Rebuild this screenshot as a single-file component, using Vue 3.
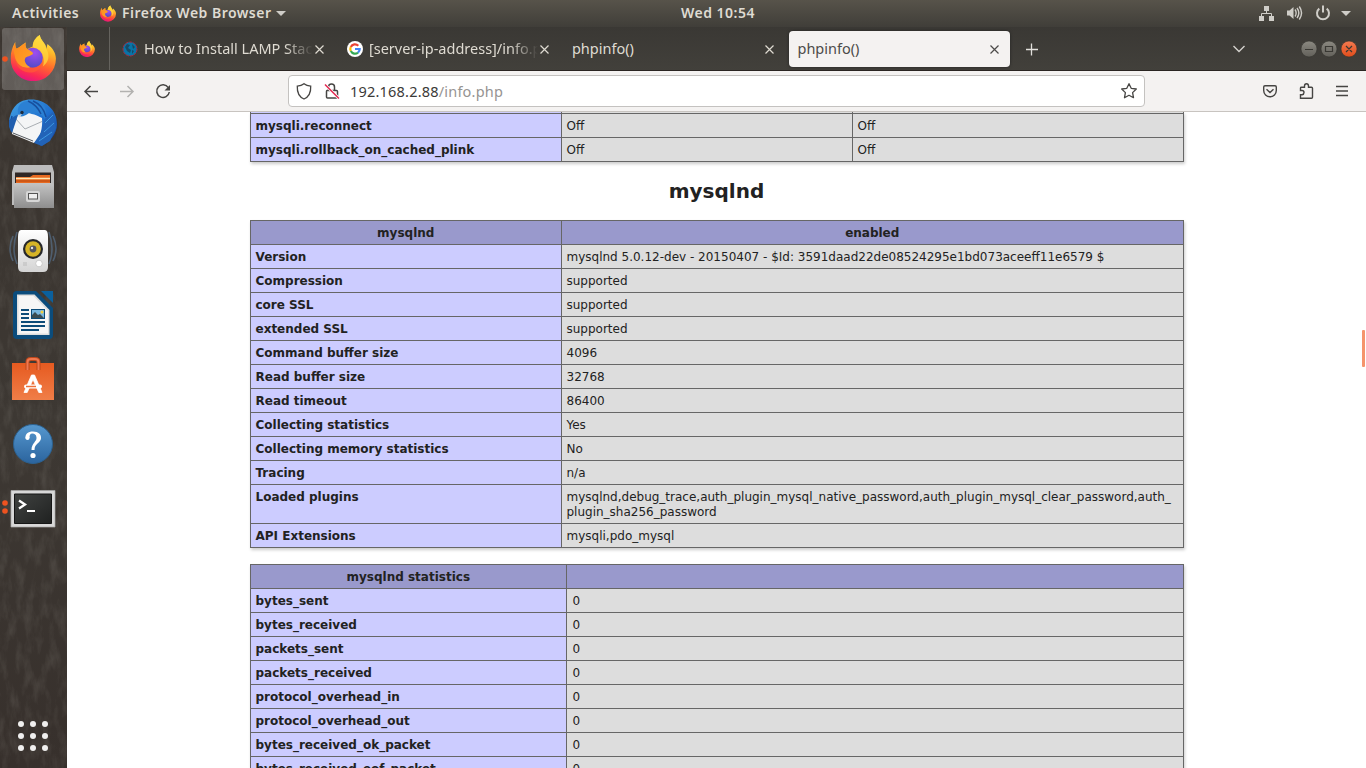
<script setup>
const prevRows = [
  ['mysqli.reconnect', 'Off', 'Off'],
  ['mysqli.rollback_on_cached_plink', 'Off', 'Off'],
]
const rows = [
  ['Version', 'mysqlnd 5.0.12-dev - 20150407 - $Id: 3591daad22de08524295e1bd073aceeff11e6579 $'],
  ['Compression', 'supported'],
  ['core SSL', 'supported'],
  ['extended SSL', 'supported'],
  ['Command buffer size', '4096'],
  ['Read buffer size', '32768'],
  ['Read timeout', '86400'],
  ['Collecting statistics', 'Yes'],
  ['Collecting memory statistics', 'No'],
  ['Tracing', 'n/a'],
  ['Loaded plugins', 'mysqlnd,debug_trace,auth_plugin_mysql_native_password,auth_plugin_mysql_clear_password,auth_\nplugin_sha256_password'],
  ['API Extensions', 'mysqli,pdo_mysql'],
]
const stats = ['bytes_sent', 'bytes_received', 'packets_sent', 'packets_received', 'protocol_overhead_in', 'protocol_overhead_out', 'bytes_received_ok_packet', 'bytes_received_eof_packet']
</script>

<template>
  <div class="desktop">
    <svg class="defs" width="0" height="0">
      <defs>
        <linearGradient id="ffBody" x1=".75" y1="0" x2=".4" y2="1">
          <stop offset="0" stop-color="#fff34a" /><stop offset=".32" stop-color="#ffb629" />
          <stop offset=".6" stop-color="#ff6a2c" /><stop offset=".85" stop-color="#fb2a55" /><stop offset="1" stop-color="#e5177c" />
        </linearGradient>
        <radialGradient id="ffCore" cx=".6" cy=".25" r=".8">
          <stop offset="0" stop-color="#a04df0" /><stop offset="1" stop-color="#4d4bc4" />
        </radialGradient>
        <linearGradient id="ffHead" x1="0" y1="0" x2="1" y2="1">
          <stop offset="0" stop-color="#ff8a1c" /><stop offset="1" stop-color="#ffa52a" />
        </linearGradient>
        <symbol id="firefox" viewBox="32 30 135 137">
          <path d="M46 51C45 60 47 67 50 71C57 67 62 62 77 52C75 60 77 67 81 72L98 64C98 50 107 37 119 30C121 47 138 55 138 72L142 57C158 70 167 84 167 101A67 66 0 0 1 32 101C32 84 38 63 46 51Z" fill="url(#ffBody)" />
          <path d="M98 64C98 50 107 37 119 30C121 47 138 52 139 72C150 92 145 112 128 124C136 104 128 80 112 74Z" fill="#ffd83d" opacity=".75" />
          <circle cx="98" cy="98" r="30" fill="url(#ffCore)" />
          <path d="M46 51C45 60 47 67 50 71C57 67 62 62 77 52C75 60 77 67 81 72C88 75 97 80 99 84C96 92 84 92 77 97C70 106 77 119 91 126C70 132 51 119 46 100C42 82 39 70 46 51Z" fill="url(#ffHead)" />
          <path d="M46 101C55 124 73 132 96 127C114 126 124 117 127 108C125 136 97 148 73 139C57 133 47 118 46 101Z" fill="#ff5a36" opacity=".75" />
        </symbol>
        <linearGradient id="bird" x1="0" y1="0" x2="1" y2="1"><stop offset="0" stop-color="#45a4e5" /><stop offset=".55" stop-color="#1f6fce" /><stop offset="1" stop-color="#143f94" /></linearGradient>
        <linearGradient id="steel" x1="0" y1="0" x2="0" y2="1"><stop offset="0" stop-color="#c4c4c4" /><stop offset="1" stop-color="#8e8e8e" /></linearGradient>
        <linearGradient id="white" x1="0" y1="0" x2="0" y2="1"><stop offset="0" stop-color="#fff" /><stop offset="1" stop-color="#d4d4d4" /></linearGradient>
        <linearGradient id="bag" x1="0" y1="0" x2="0" y2="1"><stop offset="0" stop-color="#e65a20" /><stop offset="1" stop-color="#f07e48" /></linearGradient>
        <linearGradient id="help" x1="0" y1="0" x2="0" y2="1"><stop offset="0" stop-color="#5698cf" /><stop offset="1" stop-color="#2b649e" /></linearGradient>
        <linearGradient id="term" x1="0" y1="0" x2="1" y2="1"><stop offset="0" stop-color="#404240" /><stop offset=".5" stop-color="#303231" /><stop offset="1" stop-color="#1f2120" /></linearGradient>
        <linearGradient id="btnGrey" x1="0" y1="0" x2="0" y2="1"><stop offset="0" stop-color="#8b8981" /><stop offset="1" stop-color="#62605a" /></linearGradient>
        <linearGradient id="btnRed" x1="0" y1="0" x2="0" y2="1"><stop offset="0" stop-color="#f47a50" /><stop offset="1" stop-color="#e04d1b" /></linearGradient>
        <filter id="grain" x="0" y="0" width="1" height="1">
          <feTurbulence type="fractalNoise" baseFrequency=".12 .045" numOctaves="4" seed="7" />
          <feColorMatrix values="0 0 0 0 .62  0 0 0 0 .6  0 0 0 0 .54  1.5 0 0 0 -.62" />
        </filter>
      </defs>
    </svg>

    <header class="topbar">
      <span class="activities">Activities</span>
      <svg class="app-icon" width="16" height="17"><use href="#firefox" /></svg>
      <span class="app-name">Firefox Web Browser</span>
      <svg class="caret" width="10" height="5"><path d="M0 0H10L5 5Z" fill="#cfcdc8" /></svg>
      <span class="clock">Wed 10:54</span>
      <svg class="status" width="108" height="27" viewBox="1258 0 108 27" fill="none" stroke="#cfcdc8">
        <path d="M1264 6h5v5h-5zM1259 16h5v5h-5zM1269 16h5v5h-5z" fill="#cfcdc8" stroke="none" />
        <path d="M1266.500 11v2.500M1261.500 16v-2.500h10v2.500" />
        <path d="M1287 10.500h2.500L1293.500 7v12l-4-3.500h-2.500z" fill="#cfcdc8" stroke="none" />
        <path d="M1295 9.500q2.300 3.500 0 7M1297 8q3.700 5 0 10M1299.300 6.500q4.500 6.500 0 13" stroke-width="1.400" />
        <path d="M1319.300 8.600a6 6 0 1 0 7.400 0M1323 5.500v7" stroke-width="2" />
        <path d="M1341 11h10l-5 5z" fill="#cfcdc8" stroke="none" />
      </svg>
    </header>

    <div class="main">
      <aside class="dock">
        <svg class="texture" width="67" height="741"><rect width="67" height="741" filter="url(#grain)" /></svg>
        <svg width="67" height="64" viewBox="0 27 67 64">
          <rect x="2" y="28" width="62" height="62" rx="3" fill="#fff" fill-opacity=".2" />
          <circle cx="5" cy="59" r="2.800" fill="#ee5320" />
          <use href="#firefox" x="10.500" y="35" width="45.500" height="46" />
        </svg>
        <svg width="67" height="64" viewBox="0 91 67 64">
          <path d="M9 122C10 110 17 101 26 100C42 97 57 108 57 124C57 134 50 142 41 146L38 143L14 133C10 130 9 126 9 122Z" fill="url(#bird)" />
          <path d="M18 115C14 122 13 128 12 134L34 143C40 139 43 128 42 118C35 114 28 113 23 112Z" fill="#f4f5f6" />
          <path d="M15 118L25 129L42 121.500" fill="none" stroke="#a9aeb3" />
          <path d="M13 133L33 141" stroke="#55595e" />
          <path d="M19 116C16 109 19 102 27 101C40 97 49 106 45 119C41 113 35 111 29 113C25 116 22 117 19 116Z" fill="#2b80d3" />
          <path d="M28 101Q37 105 41 114M33 101Q43 105 46 117M12 116L10 126" stroke="#184f9e" fill="none" stroke-width="1.500" />
          <path d="M9 120C13 118 15 115 18 115L12 133C9 129 9 125 9 120Z" fill="#205eaf" />
          <path d="M45 119L42 131L34 143L42 146L50 141L56 128L53 112Z" fill="#2263b8" />
          <path d="M45 123l8-8M44 132l10-9M39 141l13-9" stroke="#3d99e2" />
          <circle cx="22" cy="112.500" r="1.700" fill="#202d3d" />
          <path d="M18 115l4-1-3 4z" fill="#d4d8dc" />
        </svg>
        <svg width="67" height="64" viewBox="0 155 67 64">
          <path d="M14 165H52L54 172V205H12V172Z" fill="#bcbcbc" />
          <path d="M15 172.500H51V184H15z" fill="#302724" />
          <path d="M16 177H30L33 175H50V184H16z" fill="#e86a20" />
          <path d="M16 178.500H50" stroke="#ffe6b0" stroke-width="1.300" /><path d="M16 181H50" stroke="#b4470e" />
          <path d="M14 183H52L54 185V208H14Z" fill="url(#steel)" />
          <rect x="26" y="191" width="14" height="11" rx="2" fill="#d6d6d6" /><rect x="28.500" y="193.500" width="9" height="5.500" fill="#eee" stroke="#555" />
        </svg>
        <svg width="67" height="64" viewBox="0 219 67 64">
          <g fill="none" stroke="#57718e" stroke-opacity=".65" stroke-width="1.600"><path d="M13 236Q7 249 13 261M17 232Q11 249 17 264M53 236Q59 249 53 261M49 232Q55 249 49 264" /></g>
          <path d="M21 230H45Q48 230 48 237V267Q48 272 43 272H23Q18 272 18 267V237Q18 230 21 230Z" fill="url(#white)" />
          <circle cx="33" cy="249" r="10" fill="#26272a" /><circle cx="33" cy="249" r="7.800" fill="#d6b427" />
          <circle cx="33" cy="249" r="3.400" fill="#54545a" /><circle cx="32" cy="248" r="1.200" fill="#e6e6e6" />
          <circle cx="39" cy="263.500" r="3.300" fill="#fff" stroke="#bbb" stroke-width=".7" /><path d="M24 262v4m2-4v4" stroke="#bbb" />
        </svg>
        <svg width="67" height="64" viewBox="0 283 67 64">
          <path d="M17 291H36L53 308V335Q53 339 49 339H17Q13 339 13 335V295Q13 291 17 291Z" fill="#0b4c7c" />
          <path d="M41 291H53V303Z" fill="#0b609d" />
          <path d="M17 294.500H34.500L49.500 310V335H17Z" fill="#dedede" /><path d="M18.500 296H33.500L48 311V333.500H18.500Z" fill="#f6f6f6" />
          <path d="M21 310h8M21 314h8M21 318h8M21 322h24M21 326h24M21 330h18" stroke="#0c4b78" stroke-width="2" />
          <path d="M31 309H45V319H31z" fill="#0c4b78" /><path d="M32 310H44V318H32z" fill="#78b6de" /><path d="M32 318v-3l3-3 3 3 2-1 4 4z" fill="#3b4b50" /><circle cx="42" cy="312" r="1.500" fill="#f2cf3c" />
        </svg>
        <svg width="67" height="64" viewBox="0 347 67 64">
          <path d="M12 363H54V400H12z" fill="url(#bag)" />
          <path d="M27.500 370V362Q27.500 359 31 359H35Q38.500 359 38.500 362V370" fill="none" stroke="#bf481b" stroke-width="4" />
          <path d="M27.500 370V362Q27.500 359 31 359H35Q38.500 359 38.500 362V370" fill="none" stroke="#ef7850" stroke-width="2" />
          <path d="M31.500 375H34.500L42 392.500H38.800L33 379.500L27.200 392.500H24Z" fill="#fff" stroke="#fff" stroke-width=".8" />
          <rect x="24" y="384.500" width="18" height="4" rx="2" fill="#fff" /><path d="M26 386.500h10" stroke="#ed7038" stroke-width="1.500" />
        </svg>
        <svg width="67" height="64" viewBox="0 411 67 64">
          <circle cx="33" cy="444" r="19.500" fill="url(#help)" stroke="#2c618f" />
          <path d="M25.500 438.500C25 434 28 431.500 33 431.500C38.500 431.500 41.500 434.500 41 438.500C40.500 443 34.500 443.500 34.500 450H31.500C31.500 443 37 441.500 36.500 437.500C36.200 434.500 34.500 433.500 32.500 433.500C30 433.500 29.500 435 29.500 438Z" fill="#fff" />
          <circle cx="27.500" cy="438" r="2" fill="#fff" /><circle cx="33" cy="455.500" r="2.600" fill="#fff" />
        </svg>
        <svg width="67" height="64" viewBox="0 475 67 64">
          <circle cx="5" cy="503" r="2.800" fill="#ee5320" /><circle cx="5" cy="511" r="2.800" fill="#ee5320" />
          <path d="M11 490.500H55V527H11z" fill="#d8d8d8" stroke="#aaa" stroke-width=".7" /><path d="M14.500 494H51.500V523.500H14.500z" fill="url(#term)" stroke="#161616" />
          <path d="M19 500.500l6 4-6 4" fill="none" stroke="#fff" stroke-width="2.300" /><path d="M27 511h8" stroke="#fff" stroke-width="2" />
        </svg>
        <svg class="apps" width="67" height="50" viewBox="0 711 67 50" fill="#f0efee">
          <g v-for="y in [724, 736, 748]" :key="y"><circle v-for="x in [21, 33, 45]" :key="x" :cx="x" :cy="y" r="3" /></g>
        </svg>
      </aside>

      <section class="browser">
        <div class="tabs">
          <div class="pinned"><svg width="16" height="16"><use href="#firefox" /></svg></div>
          <div class="tab">
            <svg class="fav" width="16" height="16"><circle cx="8" cy="8" r="7" fill="#0874a8" stroke="#aa2840" stroke-width="1" stroke-dasharray="3 1" /><path d="M5 3l3 1-2 3 3 2-1 3-3-2-2-4zM10 3l3 3-2 2zM10 9l2 1-2 3z" fill="#174965" /></svg>
            <span class="title t1">How to Install LAMP Stack</span>
            <svg class="x" width="9" height="9" viewBox="0 0 9 9"><path d="M.5 .5L8.500 8.500M8.500 .5L.5 8.500" /></svg>
          </div>
          <div class="tab">
            <svg class="fav" width="16" height="16"><circle cx="8" cy="8" r="8" fill="#fff" /><g fill="none" stroke-width="2.200"><path d="M3.800 5.900A4.700 4.700 0 0 1 11.300 4.700" stroke="#ea4335" /><path d="M3.800 10.100A4.700 4.700 0 0 1 3.800 5.900" stroke="#fbbc05" /><path d="M11 11.600A4.700 4.700 0 0 1 3.800 10.100" stroke="#34a853" /><path d="M8 8H12.700A4.700 4.700 0 0 1 11 11.600" stroke="#4285f4" /></g></svg>
            <span class="title t2">[server-ip-address]/info.php</span>
            <svg class="x" width="9" height="9" viewBox="0 0 9 9"><path d="M.5 .5L8.500 8.500M8.500 .5L.5 8.500" /></svg>
          </div>
          <div class="tab wide"><span class="title">phpinfo()</span><svg class="x" width="9" height="9" viewBox="0 0 9 9"><path d="M.5 .5L8.500 8.500M8.500 .5L.5 8.500" /></svg></div>
          <div class="tab active"><span class="title">phpinfo()</span><svg class="x" width="9" height="9" viewBox="0 0 9 9"><path d="M.5 .5L8.500 8.500M8.500 .5L.5 8.500" /></svg></div>
          <svg class="tab-tools" width="346" height="43" viewBox="1020 27 346 43" fill="none">
            <path d="M1026 49.500h12M1031.500 43.500v12" stroke="#e2e0dc" stroke-width="1.300" />
            <path d="M1233.500 46l5.500 5.500 5.500-5.500" stroke="#d4d2cd" stroke-width="1.400" />
            <g stroke="#33322e" stroke-width=".6"><circle cx="1309" cy="49" r="8" fill="url(#btnGrey)" /><circle cx="1329" cy="49" r="8" fill="url(#btnGrey)" /><circle cx="1349" cy="49" r="8" fill="url(#btnRed)" /></g>
            <path d="M1305 49.500h8M1325.500 46.500h7v5h-7zM1346 46l6 6M1352 46l-6 6" stroke="#393833" stroke-width="1.200" />
          </svg>
        </div>

        <div class="toolbar">
          <svg class="nav" width="221" height="40" viewBox="67 71 221 40" fill="none" stroke="#464543" stroke-width="1.500">
            <path d="M98 91.500H85M90.500 86l-5.500 5.500 5.500 5.500" />
            <path d="M120 91.500h13M127.500 86l5.500 5.500-5.500 5.500" stroke="#b3b2b0" />
            <path d="M168.300 87.600A6.300 6.300 0 1 0 169.300 92" /><path d="M170 85v5.500h-5.500z" fill="#464543" stroke="none" />
          </svg>
          <div class="url">
            <svg width="56" height="30" viewBox="289 76 56 30" fill="none" stroke="#464543" stroke-width="1.300">
              <path d="M304 83.700C301.800 85.500 299.500 86 297.300 86.200C297 92 298.500 96.500 304 99C309.500 96.500 311 92 310.700 86.200C308.500 86 306.200 85.500 304 83.700Z" />
              <path d="M328.500 90V87Q328.500 84 331.500 84T334.500 87V90M327 90.500H336.500Q337.500 90.500 337.500 91.500V97Q337.500 98 336.500 98H327.500Q326.500 98 326.500 97V91.500Q326.500 90.500 327 90.500Z" stroke-width="1.500" />
              <path d="M325 84.500L339 98.500" stroke="#fff" stroke-width="3" /><path d="M325 84.500L339 98.500" stroke="#e22850" stroke-width="1.500" />
            </svg>
            <span class="addr">192.168.2.88<span class="path">/info.php</span></span>
            <svg class="star" width="18" height="18" viewBox="0 0 18 18" fill="none" stroke="#464543" stroke-width="1.300" stroke-linejoin="round"><path d="M9 1.700L11.200 6.300L16.300 7L12.600 10.600L13.500 15.700L9 13.300L4.500 15.700L5.400 10.600L1.700 7L6.800 6.300Z" /></svg>
          </div>
          <svg class="tools" width="120" height="40" viewBox="1246 71 120 40" fill="none" stroke="#464543" stroke-width="1.400">
            <path d="M1265 85.700H1275Q1276.300 85.700 1276.300 87V90.500A6.300 6.300 0 0 1 1263.700 90.500V87Q1263.700 85.700 1265 85.700ZM1266.500 89.200l3.500 3.300 3.500-3.300" />
            <path d="M1300.500 98.300V94.800H1302Q1304 94.500 1304 92.500T1302 90.500H1300.500V88Q1300.500 87.300 1301.500 87.300H1304.500V86Q1304.500 83.700 1306.500 83.700T1308.500 86V87.300H1311.500Q1312.500 87.300 1312.500 88.300V97.300Q1312.500 98.300 1311.500 98.300Z" />
            <path d="M1336 86.500h12M1336 91h12M1336 95.500h12" />
          </svg>
        </div>

        <div class="page">
          <div class="table three">
            <div class="row sliver"><b></b><span></span><span></span></div>
            <div v-for="r in prevRows" :key="r[0]" class="row"><b>{{ r[0] }}</b><span>{{ r[1] }}</span><span>{{ r[2] }}</span></div>
          </div>
          <h2>mysqlnd</h2>
          <div class="table two">
            <div class="row head"><b>mysqlnd</b><b>enabled</b></div>
            <div v-for="r in rows" :key="r[0]" class="row"><b>{{ r[0] }}</b><span>{{ r[1] }}</span></div>
          </div>
          <div class="table stats">
            <div class="row head"><b>mysqlnd statistics</b><b></b></div>
            <div v-for="s in stats" :key="s" class="row"><b>{{ s }}</b><span>0</span></div>
          </div>
          <div class="thumb"></div>
        </div>
      </section>
    </div>
  </div>
</template>

<style>
body { margin: 0; overflow: hidden; }
</style>
<style scoped>
* { box-sizing: border-box; }
svg { display: block; flex: none; }
.desktop { width: 1366px; height: 768px; overflow: hidden; display: flex; flex-direction: column; font-family: "Noto Sans", sans-serif; }
.defs { position: absolute; }
.topbar { height: 27px; flex: none; display: flex; align-items: center; background: linear-gradient(#57534a, #403e39); color: #dfdbd2; font-weight: 600; font-size: 14px; line-height: 25px; letter-spacing: .48px; white-space: nowrap; }
.topbar span { height: 27px; }
.activities { margin-left: 12px; width: 88px; }
.app-icon { margin-top: -1px; }
.app-name { margin-left: 6px; width: 154px; }
.caret { margin-top: 0; }
.clock { margin-left: 395px; }
.status { margin-left: auto; }
.main { flex: 1; min-height: 0; display: flex; }
.dock { width: 67px; position: relative; background: linear-gradient(#3a342f, #3d3833 55%, #37302c); display: flex; flex-direction: column; overflow: hidden; }
.texture { position: absolute; inset: 0; opacity: .16; }
.dock > svg:not(.texture) { position: relative; }
.apps { margin-top: 172px; }
.browser { width: 1299px; display: flex; flex-direction: column; }
.tabs { height: 44px; flex: none; display: flex; background: linear-gradient(#3a3834, #42403b); border-bottom: 1px solid #2a2522; color: #dfdbd2; }
.pinned { width: 43px; border-right: 1px solid #65635e; display: flex; align-items: center; padding: 0 0 0 12px; }
.tab { width: 221px; height: 36px; margin: 4px 0 0 4px; padding: 0 11px 0 8px; display: flex; align-items: center; font-size: 14.500px; white-space: nowrap; }
.tab.wide { width: 222px; }
.fav { margin-right: 6px; }
.title { flex: 1; overflow: hidden; height: 36px; line-height: 35px; }
.t1, .t2 { mask-image: linear-gradient(90deg, #000 calc(100% - 28px), transparent); margin-right: 2px; }
.x { stroke: currentColor; stroke-width: 1.200; }
.active { background: #f4f2f1; color: #4c4b49; border-radius: 4px; box-shadow: 0 0 3px #222; }
.tab-tools { margin-left: 10px; }
.toolbar { height: 41px; flex: none; display: flex; background: #f4f2f1; border-bottom: 1px solid #c8c4c0; }
.url { width: 857px; height: 32px; margin-top: 4px; border: 1px solid #c4c2c0; border-radius: 4px; background: #fff; display: flex; align-items: center; }
.addr { flex: 1; margin-left: 5px; font-size: 14.500px; letter-spacing: .2px; color: #3b3a38; }
.path { color: #969492; }
.star { margin-right: 6px; }
.tools { margin-left: auto; }
.page { flex: 1; min-height: 0; overflow: hidden; position: relative; background: #fff; padding-left: 183px; color: #222; font: 12px/15px "DejaVu Sans", sans-serif; }
.table { width: 934px; border: 1px solid #666; border-width: 1px 0 0 1px; box-shadow: 1px 2px 3px #ccc; }
.table.three { border-top: 0; }
.row { display: grid; white-space: pre-line; }
.two .row { grid-template-columns: 311px 622px; }
.three .row { grid-template-columns: 311px 291px 331px; }
.stats .row { grid-template-columns: 316px 617px; }
.row > * { border: 1px solid #666; border-width: 0 1px 1px 0; padding: 5px 5px 3px 4.500px; min-height: 24px; }
.stats .row > span { padding-left: 5.500px; }
.row > b { background: #ccf; }
.row > span { background: #ddd; }
.row.head > b { background: #99c; text-align: center; }
.row.sliver > * { min-height: 2px; padding: 0; height: 2px; }
h2 { width: 933px; margin: 0; height: 58px; line-height: 58px; font-size: 20px; text-align: center; }
.stats { margin-top: 16px; }
.thumb { position: absolute; right: 1px; top: 218px; width: 3px; height: 37px; border-radius: 1px; background: #f5946c; }
</style>
